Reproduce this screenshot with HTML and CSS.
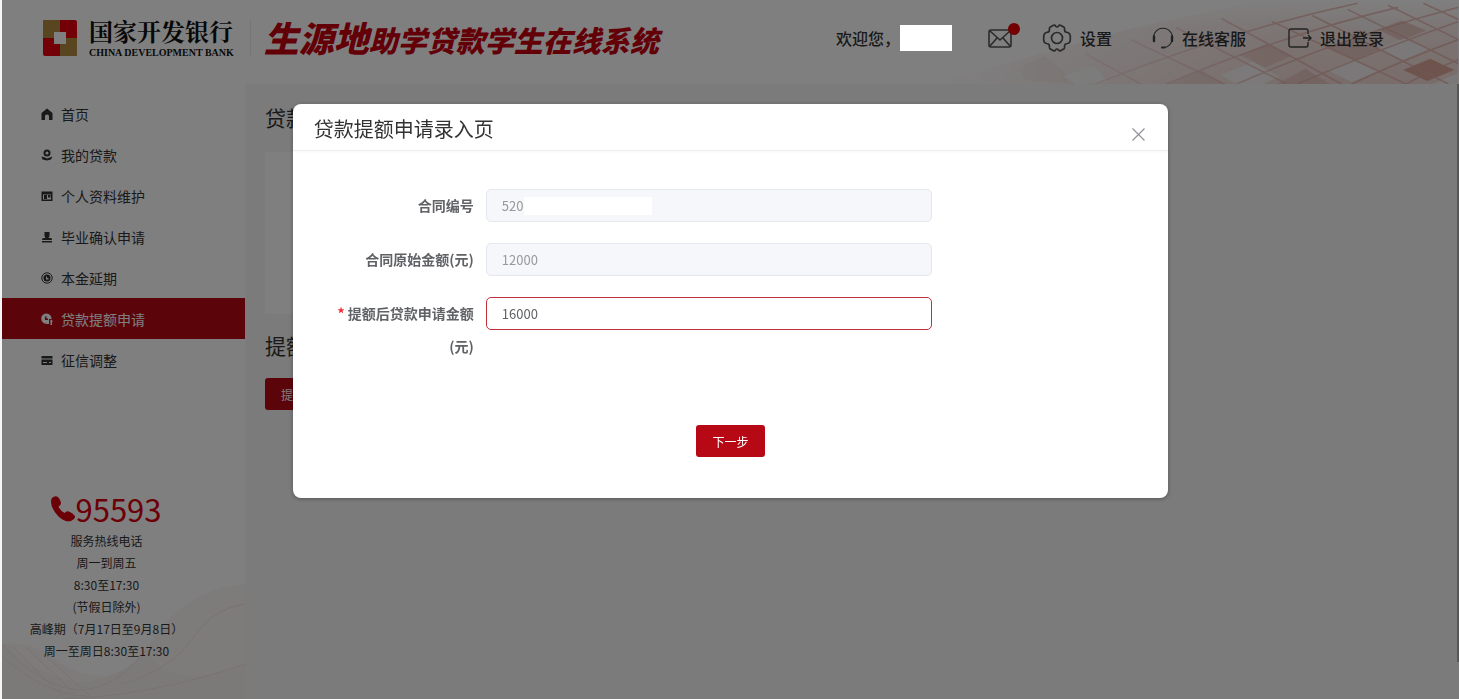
FILE: index.html
```html
<!DOCTYPE html>
<html lang="zh-CN">
<head>
    <meta charset="UTF-8">
    <meta name="viewport" content="width=device-width, initial-scale=1.0">
    <title>生源地助学贷款学生在线系统</title>
    <link rel="stylesheet" href="styles.css">
</head>
<body>

<header class="header">
    <svg class="header-bg" viewBox="0 0 520 84" preserveAspectRatio="xMaxYMax slice" aria-hidden="true">
        <defs>
            <linearGradient id="fade" x1="0" y1="0" x2="1" y2="0">
                <stop offset="0" stop-color="#fff" stop-opacity="0"/>
                <stop offset="0.35" stop-color="#fff" stop-opacity="0.5"/>
                <stop offset="0.7" stop-color="#fff"/>
            </linearGradient>
            <linearGradient id="shade" x1="0" y1="0" x2="0" y2="1">
                <stop offset="0" stop-color="#fff"/>
                <stop offset="0.4" stop-color="#f8e8e5"/>
                <stop offset="1" stop-color="#f2dad6"/>
            </linearGradient>
            <mask id="m"><path d="M0 84L190 30L330 0H520V84Z" fill="url(#fade)"/></mask>
        </defs>
        <g mask="url(#m)">
            <rect width="520" height="84" fill="url(#shade)"/>
            <g fill="#e9c8c3">
                <path d="M230 84L265 70L288 84Z"/>
                <path d="M84 68L110 56L142 84L90 80Z"/>
                <path d="M340 84L368 69L393 84Z"/>
                <path d="M303 55L330 44L355 56L328 68Z"/>
                <path d="M391 48L418 37L443 49L417 60Z"/>
                <path d="M440 30L464 21L488 31L463 41Z"/>
            </g>
            <path d="M465 70L492 59L516 70L489 81Z" fill="#dca99b"/>
            <g fill="#f5f1f0">
                <path d="M128 76L158 66L172 82L140 84Z"/>
                <path d="M440 49L466 39L491 49L465 60Z"/>
                <path d="M410 24L432 17L452 24L430 32Z"/>
                <path d="M284 75L316 62L342 77L326 84H300Z"/>
                <path d="M390 70L416 60L441 71L414 82Z"/>
                <path d="M494 84L520 73V84Z"/>
            </g>
            <g fill="none" stroke="#e0aca4" stroke-width="1.600" opacity="0.7">
                <path d="M160 84Q290 32 420 4M230 84Q350 34 460 8M300 84Q410 36 520 8M360 84Q440 50 520 22M414 84Q470 58 520 40M468 84Q494 70 520 60"/>
                <path d="M150 54L205 84M195 40L288 84M240 28L350 84M285 19L404 84M335 22L468 84M375 16L510 84M410 10L520 64M450 6L520 40M485 4L520 20"/>
            </g>
        </g>
    </svg>

    <a class="brand" href="#">
        <svg class="brand-mark" viewBox="0 0 34 36" aria-hidden="true">
            <rect width="34" height="36" rx="2" fill="#e6000f"/>
            <path d="M2 0H17V18H0V2Q0 0 2 0Z" fill="#b58a42"/>
            <path d="M17 18H34V34Q34 36 32 36H17Z" fill="#b58a42"/>
            <rect x="11" y="12" width="12" height="12" fill="#fff"/>
        </svg>
        <span class="brand-text">
            <span class="brand-cn">国家开发银行</span>
            <span class="brand-en">CHINA DEVELOPMENT BANK</span>
        </span>
    </a>
    <h1 class="system-name"><span class="system-name-big">生源地</span>助学贷款学生在线系统</h1>

    <nav class="top-nav">
        <span class="welcome">欢迎您，<span class="user-name"></span></span>
        <a class="mail" href="#" aria-label="消息">
            <svg width="24" height="19" viewBox="0 0 24 19" fill="none" stroke="#555" stroke-width="1.600" aria-hidden="true">
                <rect x="1" y="1" width="22" height="17" rx="2"/>
                <path d="M2 2L12 11L22 2M2 17L9 9M22 17L15 9"/>
            </svg>
            <span class="dot"></span>
        </a>
        <a class="settings" href="#">
            <svg width="30" height="30" viewBox="0 0 30 30" fill="none" stroke="#555" stroke-width="1.700" aria-hidden="true">
                <path d="M11 2.500Q13 1.500 13.500 3Q15 5 16.500 3Q17.500 1.500 19 2.500L22 4.200Q23 5 22.500 6.500Q22.500 9.500 25.500 9.500Q28 10 28.300 13V17Q28 20 25.500 20.500Q22.500 20.500 22.500 23.500Q23 25 22 25.800L19 27.500Q17.500 28.500 16.500 27Q15 25 13.500 27Q12.500 28.500 11 27.500L8 25.800Q7 25 7.500 23.500Q7.500 20.500 4.500 20.500Q2 20 1.700 17V13Q2 10 4.500 9.500Q7.500 9.500 7.500 6.500Q7 5 8 4.200Z"/>
                <circle cx="15" cy="15" r="5.500"/>
            </svg>
            设置
        </a>
        <a class="service" href="#">
            <svg width="22" height="22" viewBox="0 0 22 22" fill="none" stroke="#444" aria-hidden="true">
                <path d="M2.500 15A9.500 9.500 0 1 1 19.500 15Q17 20 12 20.500" stroke-width="1.100"/>
                <path d="M2 9.500V14M20 9.500V14" stroke-width="2.400" stroke-linecap="round"/>
                <path d="M10 20.500H12.500" stroke-width="2" stroke-linecap="round"/>
            </svg>
            在线客服
        </a>
        <a class="logout" href="#">
            <svg width="24" height="20" viewBox="0 0 24 20" fill="none" stroke="#444" stroke-width="1.400" aria-hidden="true">
                <path d="M20 6V3Q20 1 18 1H3Q1 1 1 3V17Q1 19 3 19H18Q20 19 20 17V14"/>
                <path d="M15 10H23M20 7L23 10L20 13"/>
            </svg>
            退出登录
        </a>
    </nav>
</header>

<div class="page">
    <aside class="sidebar">
        <ul class="menu">
            <li><a class="menu-item" href="#">
                <svg class="menu-icon" viewBox="0 0 12 12" aria-hidden="true"><path d="M6 0.500L11.500 5V12H8V8Q8 6.500 6 6.500Q4 6.500 4 8V12H0.500V5Z"/></svg>
                首页</a></li>
            <li><a class="menu-item" href="#">
                <svg class="menu-icon" viewBox="0 0 12 12" aria-hidden="true"><path fill-rule="evenodd" d="M6 0.500A3.500 3.500 0 1 1 6 7.500A3.500 3.500 0 1 1 6 0.500ZM6 2.500A1.500 1.500 0 1 0 6 5.500A1.500 1.500 0 1 0 6 2.500Z"/><path d="M0.500 7.500L4 8.500L6 9.500L11.500 7.500L10 10.500L6 11.500L1.500 10.500Z"/></svg>
                我的贷款</a></li>
            <li><a class="menu-item" href="#">
                <svg class="menu-icon" viewBox="0 0 12 12" aria-hidden="true"><path fill-rule="evenodd" d="M0.500 1.500H11.500V11H0.500ZM2 4.500V9.500H10V4.500Z"/><path d="M3 5H6V9H3ZM7 5H9.500V7.500H7Z"/></svg>
                个人资料维护</a></li>
            <li><a class="menu-item" href="#">
                <svg class="menu-icon" viewBox="0 0 12 12" aria-hidden="true"><path d="M3.500 1H8.500V5L7.500 7H10Q11 7 11 9H1Q1 7 2.500 7H4.500L3.500 5ZM1 10H11V11.500H1Z"/></svg>
                毕业确认申请</a></li>
            <li><a class="menu-item" href="#">
                <svg class="menu-icon" viewBox="0 0 12 12" aria-hidden="true"><circle cx="6" cy="6" r="5.200" fill="none" stroke="currentColor"/><path fill-rule="evenodd" d="M6 2.500A3.500 3.500 0 1 1 6 9.500A3.500 3.500 0 1 1 6 2.500ZM5 4.500V7.500H7.500V6H6V4.500Z"/></svg>
                本金延期</a></li>
            <li><a class="menu-item active" href="#">
                <svg class="menu-icon" viewBox="0 0 12 12" aria-hidden="true"><path fill-rule="evenodd" d="M5.500 0.500Q10.500 1 10.500 6H8V11Q3 11.500 1 8.500Q-1 4 2 1.800Q3.500 0.500 5.500 0.500ZM4 3.500V7H7V5.500H5.500V3.500Z"/><path d="M10.500 6.500L12 8.500H11V12H9.500V8.500H8.500Z"/></svg>
                贷款提额申请</a></li>
            <li><a class="menu-item" href="#">
                <svg class="menu-icon" viewBox="0 0 12 12" aria-hidden="true"><path fill-rule="evenodd" d="M0.500 2H11.500V4.500H0.500ZM0.500 5.500H11.500V11H0.500ZM2 8V9H6V8ZM8 8V9H10V8Z"/></svg>
                征信调整</a></li>
        </ul>

        <div class="hotline">
            <div class="hotline-number">
                <svg width="24" height="26" viewBox="0 0 24 26" fill="#d7000f" aria-hidden="true">
                    <path d="M1 2Q4 -1 7 1Q9 3 10 7Q10 9 7.500 10.500Q9 14.500 13.500 17Q15.500 14.500 18 15.500Q22 17 24 20Q24.500 23 20 25Q14 27 7 20Q0 12 0 6Q0 3 1 2Z"/>
                </svg>
                <span>95593</span>
            </div>
            <p>服务热线电话</p>
            <p>周一到周五</p>
            <p>8:30至17:30</p>
            <p>(节假日除外)</p>
            <p>高峰期（7月17日至9月8日）</p>
            <p>周一至周日8:30至17:30</p>
        </div>

        <svg class="sidebar-bg" viewBox="0 0 243 115" preserveAspectRatio="none" aria-hidden="true">
            <path d="M0 60Q35 56 60 80Q110 110 145 65Q180 5 243 0V115H0Z" fill="#fcf7f7"/>
            <path d="M0 60Q35 90 75 98Q120 96 145 65Q165 110 243 80V115H0Z" fill="#f9f3f3"/>
            <g fill="none" stroke="#f3e6e6">
                <path d="M0 60Q40 105 80 106Q115 104 145 65M0 72Q45 112 85 112M60 115Q150 112 243 80M10 62L60 112M25 64L75 112M42 70L88 112"/>
                <path d="M120 100Q170 85 190 55Q210 25 243 20"/>
            </g>
        </svg>
    </aside>

    <main class="main">
        <h2 class="main-title">贷款</h2>
        <div class="card"></div>
        <h2 class="main-title">提额</h2>
        <button class="btn" type="button">提额</button>
        <div class="scroll-thumb"></div>
    </main>
</div>

<div class="mask">
    <div class="modal" role="dialog" aria-labelledby="modal-title">
        <div class="modal-header">
            <h2 id="modal-title">贷款提额申请录入页</h2>
            <button class="close-button" type="button" aria-label="关闭">
                <svg width="13" height="13" viewBox="0 0 13 13" stroke="#909399" stroke-width="1.200" aria-hidden="true"><path d="M0.500 0.500L12.500 12.500M12.500 0.500L0.500 12.500"/></svg>
            </button>
        </div>
        <form class="modal-body">
            <div class="form-row">
                <label for="contractNo">合同编号</label>
                <div class="field">
                    <input type="text" id="contractNo" value="520" disabled>
                    <span class="field-cover"></span>
                </div>
            </div>
            <div class="form-row">
                <label for="originAmount">合同原始金额(元)</label>
                <div class="field">
                    <input type="text" id="originAmount" value="12000" disabled>
                </div>
            </div>
            <div class="form-row">
                <label for="newAmount"><span class="required">*</span> 提额后贷款申请金额(元)</label>
                <div class="field">
                    <input class="is-error" type="text" id="newAmount" value="16000">
                </div>
            </div>
            <div class="form-actions">
                <button class="btn" type="button">下一步</button>
            </div>
        </form>
    </div>
</div>

</body>
</html>
```
FILE: styles.css
```css
* {
    box-sizing: border-box;
}
body {
    margin: 0;
    padding-left: 2px;
    min-height: 100vh;
    display: flex;
    flex-direction: column;
    background: #f6f6f6;
    color: #333;
    font-family: "Noto Sans CJK SC", "Noto Sans", sans-serif;
    font-size: 14px;
}
h1, h2, p, ul {
    margin: 0;
    padding: 0;
    font-weight: 400;
}
a {
    color: inherit;
    text-decoration: none;
}

/* Header */
.header {
    position: relative;
    display: flex;
    align-items: center;
    height: 84px;
    padding: 0 75px 8px 41px;
    background: #fff;
}
.header-bg {
    position: absolute;
    right: 0;
    top: 0;
    width: 36%;
    height: 100%;
}
.brand {
    display: flex;
    align-items: center;
    gap: 12px;
}
.brand-mark {
    width: 34px;
    height: 36px;
}
.brand-text {
    display: flex;
    flex-direction: column;
    color: #111;
    white-space: nowrap;
}
.brand-cn {
    font-family: "Noto Serif CJK SC", "Noto Sans CJK SC", serif;
    font-size: 24px;
    font-weight: 700;
    line-height: 30px;
}
.brand-en {
    font-family: "Liberation Serif", serif;
    font-size: 10px;
    font-weight: 700;
    line-height: 14px;
}
.system-name {
    margin-left: 16px;
    padding-left: 13px;
    border-left: 1px solid #eee;
    color: #c7000f;
    font-size: 29px;
    font-weight: 900;
    font-style: italic;
    line-height: 36px;
    white-space: nowrap;
}
.system-name-big {
    font-size: 35px;
}
.top-nav {
    position: relative;
    display: flex;
    align-items: center;
    margin-left: auto;
    font-size: 16px;
    font-weight: 500;
    line-height: 22px;
    white-space: nowrap;
}
.top-nav a,
.welcome {
    display: flex;
    align-items: center;
}
.user-name {
    position: relative;
    z-index: 30;
    width: 52px;
    height: 26px;
    background: #fff;
}
.mail {
    position: relative;
    margin-left: 36px;
}
.dot {
    position: absolute;
    top: -6px;
    right: -8px;
    width: 12px;
    height: 12px;
    border-radius: 50%;
    background: #e60000;
}
.settings {
    gap: 8px;
    margin-left: 30px;
}
.service {
    gap: 8px;
    margin-left: 40px;
}
.logout {
    gap: 8px;
    margin-left: 42px;
}

/* Page */
.page {
    flex: 1;
    display: flex;
}
.sidebar {
    position: relative;
    width: 243px;
    background: #fff;
}
.menu {
    padding-top: 9px;
    list-style: none;
}
.menu-item {
    display: flex;
    align-items: center;
    gap: 8px;
    height: 41px;
    padding-left: 39px;
}
.menu-icon {
    width: 12px;
    height: 12px;
    fill: currentColor;
}
.menu-item.active {
    background: #b60915;
    color: #fff;
}
.hotline {
    position: relative;
    z-index: 1;
    padding: 108px 34px 0 0;
    font-size: 12px;
    line-height: 22px;
    text-align: center;
    white-space: nowrap;
}
.hotline-number {
    display: flex;
    align-items: center;
    justify-content: center;
    color: #d7000f;
    font-size: 31px;
    line-height: 42px;
}
.sidebar-bg {
    position: absolute;
    left: 0;
    bottom: 0;
    width: 100%;
    height: 115px;
}
.main {
    position: relative;
    flex: 1;
    padding: 18px 20px 0 20px;
}
.main-title {
    font-size: 21px;
    line-height: 30px;
}
.card {
    width: 75%;
    height: 162px;
    margin: 20px 0 16px;
    background: #fff;
}
.main .btn {
    margin-top: 18px;
}
.scroll-thumb {
    position: absolute;
    top: 0;
    right: 0;
    bottom: 37px;
    width: 2px;
    background: #b0b0b0;
}
.btn {
    height: 32px;
    padding: 0 16px;
    border: none;
    border-radius: 3px;
    background: #b60915;
    color: #fff;
    font-family: inherit;
    font-size: 12px;
    cursor: pointer;
}

/* Modal */
.mask {
    position: fixed;
    top: 0;
    right: 0;
    bottom: 0;
    left: 2px;
    z-index: 20;
    background: rgba(0, 0, 0, 0.5);
}
.modal {
    width: 60vw;
    margin: 104px auto 0;
    border-radius: 8px;
    background: #fff;
    box-shadow: 0 1px 4px rgba(0, 0, 0, 0.3);
}
.modal-header {
    display: flex;
    align-items: center;
    justify-content: space-between;
    height: 47px;
    padding: 4px 21px 0 21px;
    border-bottom: 1px solid #eee;
    box-shadow: 0 1px 2px rgba(0, 0, 0, 0.04);
}
.modal-header h2 {
    font-size: 20px;
    line-height: 30px;
}
.close-button {
    display: flex;
    padding: 10px 2px 0;
    border: none;
    background: none;
    cursor: pointer;
}
.modal-body {
    padding: 38px 0 41px;
}
.form-row {
    display: flex;
    align-items: flex-start;
    gap: 12px;
    margin-bottom: 21px;
    padding: 0 27% 0 31px;
}
.form-row label {
    width: 150px;
    color: #606266;
    font-weight: 700;
    line-height: 33px;
    text-align: right;
}
.required {
    color: #f5222d;
}
.field {
    position: relative;
    flex: 1;
}
.field input {
    display: block;
    width: 100%;
    height: 33px;
    padding: 0 15px;
    border: 1px solid #dcdfe6;
    border-radius: 5px;
    background: #fff;
    color: #606266;
    font-family: inherit;
    font-size: 13px;
}
.field input:disabled {
    border-color: #e4e7ed;
    background: #f5f7fa;
    color: #999;
}
.field input.is-error {
    border-color: #c0303c;
}
.field-cover {
    position: absolute;
    top: 8px;
    left: 38px;
    width: 128px;
    height: 18px;
    background: #fff;
}
.form-actions {
    padding-top: 41px;
    text-align: center;
}
```
